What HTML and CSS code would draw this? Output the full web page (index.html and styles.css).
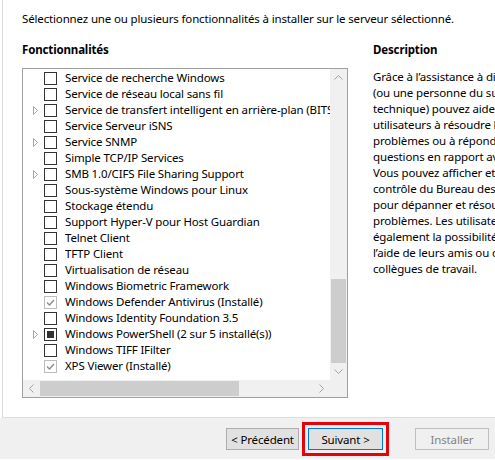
FILE: index.html
```html
<!DOCTYPE html>
<html lang="fr">
<head>
  <meta charset="UTF-8">
  <title>Assistant Ajout de rôles et de fonctionnalités</title>
  <link rel="stylesheet" href="styles.css">
</head>
<body>
  <div class="main">
    <div class="intro">Sélectionnez une ou plusieurs fonctionnalités à installer sur le serveur sélectionné.</div>

    <div class="colonnes">
      <div class="col-liste">
        <div class="titre">Fonctionnalités</div>
        <div class="listbox">
          <div class="arbre">
            <div class="lignes">
              <div class="ligne"><span class="exp"></span><span class="case"></span><span class="lib">Service de recherche Windows</span></div>
              <div class="ligne"><span class="exp"></span><span class="case"></span><span class="lib">Service de réseau local sans fil</span></div>
              <div class="ligne"><span class="exp"><svg width="5" height="9" viewBox="0 0 5 9"><path d="M0.5 0.5 L4.5 4.5 L0.5 8.5 Z" fill="#fff" stroke="#a6a6a6"/></svg></span><span class="case"></span><span class="lib">Service de transfert intelligent en arrière-plan (BITS)</span></div>
              <div class="ligne"><span class="exp"></span><span class="case"></span><span class="lib">Service Serveur iSNS</span></div>
              <div class="ligne"><span class="exp"><svg width="5" height="9" viewBox="0 0 5 9"><path d="M0.5 0.5 L4.5 4.5 L0.5 8.5 Z" fill="#fff" stroke="#a6a6a6"/></svg></span><span class="case"></span><span class="lib">Service SNMP</span></div>
              <div class="ligne"><span class="exp"></span><span class="case"></span><span class="lib">Simple TCP/IP Services</span></div>
              <div class="ligne"><span class="exp"><svg width="5" height="9" viewBox="0 0 5 9"><path d="M0.5 0.5 L4.5 4.5 L0.5 8.5 Z" fill="#fff" stroke="#a6a6a6"/></svg></span><span class="case"></span><span class="lib">SMB 1.0/CIFS File Sharing Support</span></div>
              <div class="ligne"><span class="exp"></span><span class="case"></span><span class="lib">Sous-système Windows pour Linux</span></div>
              <div class="ligne"><span class="exp"></span><span class="case"></span><span class="lib">Stockage étendu</span></div>
              <div class="ligne"><span class="exp"></span><span class="case"></span><span class="lib">Support Hyper-V pour Host Guardian</span></div>
              <div class="ligne"><span class="exp"></span><span class="case"></span><span class="lib">Telnet Client</span></div>
              <div class="ligne"><span class="exp"></span><span class="case"></span><span class="lib">TFTP Client</span></div>
              <div class="ligne"><span class="exp"></span><span class="case"></span><span class="lib">Virtualisation de réseau</span></div>
              <div class="ligne"><span class="exp"></span><span class="case"></span><span class="lib">Windows Biometric Framework</span></div>
              <div class="ligne"><span class="exp"></span><span class="case installe"><svg width="11" height="11" viewBox="0 0 11 11"><path d="M2 5.5 L4.5 8 L9 3" fill="none" stroke="#8c8c8c" stroke-width="1.4"/></svg></span><span class="lib">Windows Defender Antivirus (Installé)</span></div>
              <div class="ligne"><span class="exp"></span><span class="case"></span><span class="lib">Windows Identity Foundation 3.5</span></div>
              <div class="ligne"><span class="exp"><svg width="5" height="9" viewBox="0 0 5 9"><path d="M0.5 0.5 L4.5 4.5 L0.5 8.5 Z" fill="#fff" stroke="#a6a6a6"/></svg></span><span class="case partiel"><span class="carre"></span></span><span class="lib">Windows PowerShell (2 sur 5 installé(s))</span></div>
              <div class="ligne"><span class="exp"></span><span class="case"></span><span class="lib">Windows TIFF IFilter</span></div>
              <div class="ligne"><span class="exp"></span><span class="case installe"><svg width="11" height="11" viewBox="0 0 11 11"><path d="M2 5.5 L4.5 8 L9 3" fill="none" stroke="#8c8c8c" stroke-width="1.4"/></svg></span><span class="lib">XPS Viewer (Installé)</span></div>
            </div>
          </div>
          <div class="vscroll">
            <div class="fleche"><svg width="9" height="5" viewBox="0 0 9 5"><path d="M0.5 4.5 L4.5 0.5 L8.5 4.5" fill="none" stroke="#a3a3a3"/></svg></div>
            <div class="piste-v"><div class="pouce-v"></div></div>
            <div class="fleche"><svg width="9" height="5" viewBox="0 0 9 5"><path d="M0.5 0.5 L4.5 4.5 L8.5 0.5" fill="none" stroke="#a3a3a3"/></svg></div>
          </div>
          <div class="hscroll">
            <div class="fleche"><svg width="5" height="9" viewBox="0 0 5 9"><path d="M4.5 0.5 L0.5 4.5 L4.5 8.5" fill="none" stroke="#a3a3a3"/></svg></div>
            <div class="pouce-h"></div>
            <div class="piste-h"></div>
            <div class="fleche"><svg width="5" height="9" viewBox="0 0 5 9"><path d="M0.5 0.5 L4.5 4.5 L0.5 8.5" fill="none" stroke="#a3a3a3"/></svg></div>
          </div>
          <div class="coin"></div>
        </div>
      </div>

      <div class="col-desc">
        <div class="titre">Description</div>
        <div class="desc">
          <div>Grâce à l’assistance à distance, vous</div>
          <div>(ou une personne du support</div>
          <div>technique) pouvez aider des</div>
          <div>utilisateurs à résoudre leurs</div>
          <div>problèmes ou à répondre à leurs</div>
          <div>questions en rapport avec leur PC.</div>
          <div>Vous pouvez afficher et prendre le</div>
          <div>contrôle du Bureau des utilisateurs</div>
          <div>pour dépanner et résoudre des</div>
          <div>problèmes. Les utilisateurs ont</div>
          <div>également la possibilité de demander</div>
          <div>l’aide de leurs amis ou de leurs</div>
          <div>collègues de travail.</div>
        </div>
      </div>
    </div>
  </div>

  <div class="pied">
    <button class="btn">&lt; Précédent</button>
    <button class="btn btn-defaut">Suivant &gt;</button>
    <button class="btn btn-off" disabled>Installer</button>
  </div>
</body>
</html>
```

FILE: styles.css
```css
body {
  margin: 0;
  width: 495px;
  height: 460px;
  overflow: hidden;
  background-color: #fff;
  font-family: "Noto Sans", sans-serif;
  font-size: 11.5px;
  letter-spacing: -0.15px;
  line-height: 16px;
  color: #000;
}

.main {
  height: 418px;
  margin-left: 2px;
  border-left: 1px solid #d9d9d9;
  border-bottom: 1px solid #dfdfdf;
  padding-left: 19px;
  box-sizing: border-box;
}

.intro {
  padding-top: 11px;
  white-space: nowrap;
}

.colonnes {
  display: flex;
  margin-top: 15px;
}

.titre {
  font-weight: bold;
  height: 16px;
}

.col-liste {
  width: 326px;
  flex: none;
}

.col-desc {
  margin-left: 25px;
  flex: 1;
  min-width: 0;
  overflow: hidden;
}

.desc {
  margin-top: 11px;
  white-space: nowrap;
}

.listbox {
  margin-top: 10px;
  height: 330px;
  border: 1px solid #a0a0a0;
  box-sizing: border-box;
  display: grid;
  grid-template-columns: 1fr 17px;
  grid-template-rows: 1fr 17px;
}

.arbre {
  overflow: hidden;
  background: #fff;
}

.lignes {
  margin-top: 1px;
}

.ligne {
  display: flex;
  align-items: center;
  height: 16px;
  white-space: nowrap;
}

.exp {
  width: 21px;
  flex: none;
  display: flex;
  align-items: center;
}

.exp svg {
  margin-left: 10px;
}

.case {
  width: 13px;
  height: 13px;
  flex: none;
  box-sizing: border-box;
  border: 1px solid #333;
  background: #fff;
  display: flex;
  align-items: center;
  justify-content: center;
}

.case.installe {
  border-color: #bcbcbc;
}

.case .carre {
  width: 7px;
  height: 7px;
  background: #333;
}

.lib {
  margin-left: 8px;
}

.vscroll {
  background: #f0f0f0;
  display: flex;
  flex-direction: column;
}

.fleche {
  width: 17px;
  height: 17px;
  flex: none;
  display: flex;
  align-items: center;
  justify-content: center;
}

.piste-v {
  flex: 1;
  display: flex;
  flex-direction: column;
  justify-content: flex-end;
  padding: 0 1px;
}

.pouce-v {
  height: 84px;
  background: #cdcdcd;
}

.hscroll {
  background: #f0f0f0;
  display: flex;
}

.pouce-h {
  width: 199px;
  margin: 1px 0;
  background: #cdcdcd;
}

.piste-h {
  flex: 1;
}

.coin {
  background: #f0f0f0;
}

.pied {
  height: 41px;
  background: #f0f0f0;
  display: flex;
  align-items: flex-start;
  justify-content: flex-end;
  padding: 10px 6px 0 0;
  box-sizing: border-box;
}

.btn {
  font-family: "Noto Sans", sans-serif;
  font-size: 11.5px;
  letter-spacing: -0.15px;
  height: 22px;
  width: 73px;
  padding: 0;
  background: #e1e1e1;
  border: 1px solid #adadad;
  color: #000;
}

.btn-defaut {
  width: 75px;
  margin-left: 9px;
  border-color: #0078d7;
  outline: 3px solid #e8000b;
  outline-offset: 3px;
}

.btn-off {
  width: 74px;
  margin-left: 32px;
  background: #f0f0f0;
  border-color: #bfbfbf;
  color: #838383;
}
```
